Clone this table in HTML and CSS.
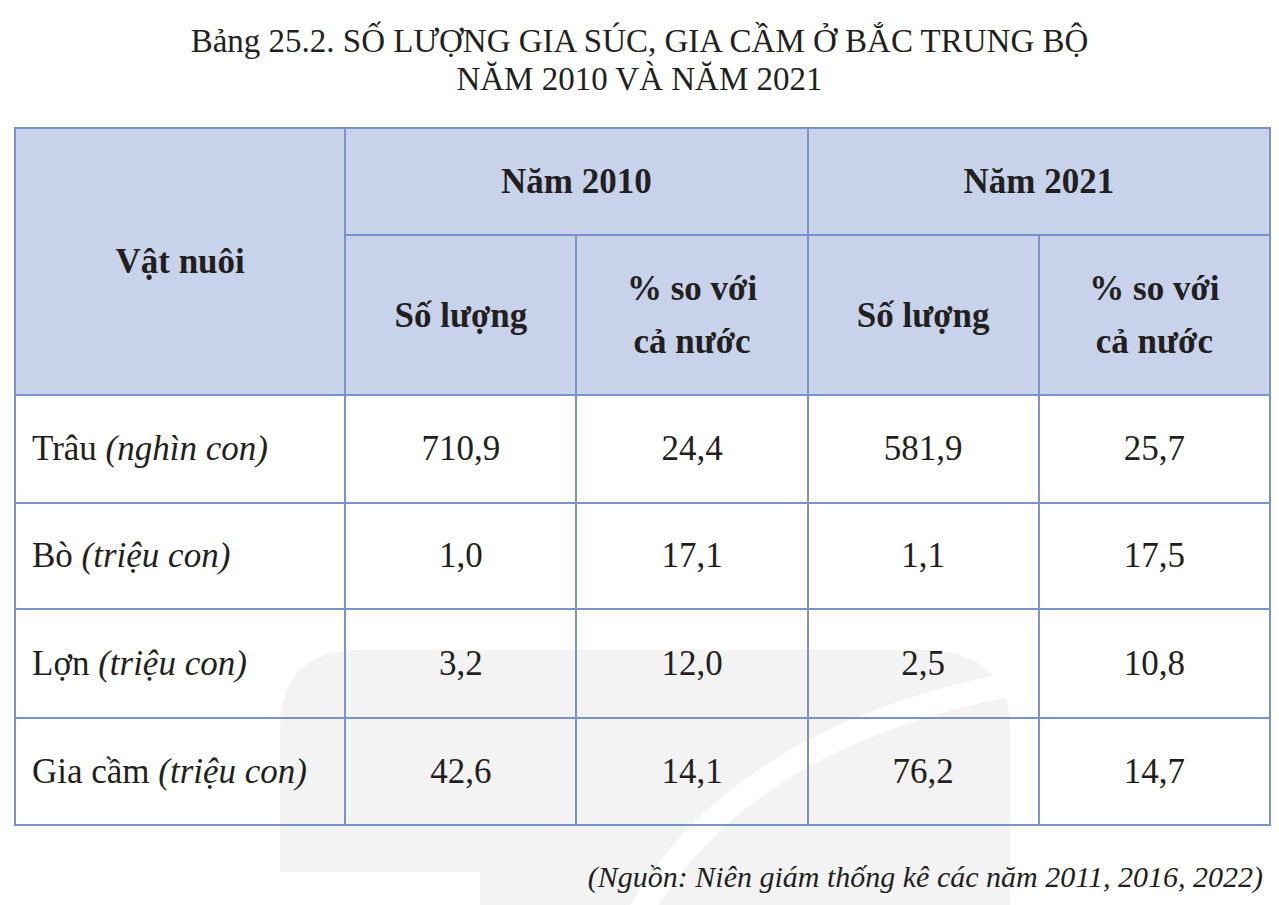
FILE: index.html
```html
<!DOCTYPE html>
<html lang="vi">
<head>
<meta charset="utf-8">
<title>Bảng 25.2</title>
<link rel="stylesheet" href="styles.css">
</head>
<body>
<div class="page">
  <svg class="watermark" width="740" height="255" viewBox="0 0 740 255" aria-hidden="true">
    <path d="M0 255 L0 80 Q0 0 80 0 L640 0 Q730 0 730 80 L730 255 Z" fill="#f3f3f3"/>
    <path d="M360 262 Q460 90 722 36" fill="none" stroke="#ffffff" stroke-width="24"/>
    <rect x="0" y="222" width="200" height="40" fill="#ffffff"/>
  </svg>
  <h1 class="title">Bảng 25.2. SỐ LƯỢNG GIA SÚC, GIA CẦM Ở BẮC TRUNG BỘ<br>NĂM 2010 VÀ NĂM 2021</h1>
  <table class="data">
    <colgroup>
      <col class="c-name"><col class="c-num"><col class="c-num"><col class="c-num"><col class="c-num">
    </colgroup>
    <thead>
      <tr class="h1">
        <th class="hd" rowspan="2">Vật nuôi</th>
        <th class="hd" colspan="2">Năm 2010</th>
        <th class="hd" colspan="2">Năm 2021</th>
      </tr>
      <tr class="h2">
        <th class="hd">Số lượng</th>
        <th class="hd">% so với<br>cả nước</th>
        <th class="hd">Số lượng</th>
        <th class="hd">% so với<br>cả nước</th>
      </tr>
    </thead>
    <tbody>
      <tr class="r1"><td class="cell name">Trâu <i class="unit">(nghìn con)</i></td><td class="cell">710,9</td><td class="cell">24,4</td><td class="cell">581,9</td><td class="cell">25,7</td></tr>
      <tr class="r2"><td class="cell name">Bò <i class="unit">(triệu con)</i></td><td class="cell">1,0</td><td class="cell">17,1</td><td class="cell">1,1</td><td class="cell">17,5</td></tr>
      <tr class="r3"><td class="cell name">Lợn <i class="unit">(triệu con)</i></td><td class="cell">3,2</td><td class="cell">12,0</td><td class="cell">2,5</td><td class="cell">10,8</td></tr>
      <tr class="r4"><td class="cell name">Gia cầm <i class="unit">(triệu con)</i></td><td class="cell">42,6</td><td class="cell">14,1</td><td class="cell">76,2</td><td class="cell">14,7</td></tr>
    </tbody>
  </table>
  <p class="source">(Nguồn: Niên giám thống kê các năm 2011, 2016, 2022)</p>
</div>
</body>
</html>
```

FILE: styles.css
```css
html, body {
  margin: 0;
  padding: 0;
  background: #ffffff;
}

.page {
  position: relative;
  width: 1279px;
  height: 905px;
  overflow: hidden;
  font-family: "Liberation Serif", "Times New Roman", Times, serif;
  color: #231f20;
}

.watermark {
  position: absolute;
  left: 280px;
  top: 650px;
  z-index: 0;
}

.title {
  position: relative;
  z-index: 1;
  margin: 0;
  padding-top: 22px;
  font-family: "Liberation Serif", "Times New Roman", Times, serif;
  font-weight: normal;
  font-size: 33px;
  line-height: 38px;
  text-align: center;
}

.data {
  position: relative;
  z-index: 1;
  margin: 29px 0 0 14px;
  width: 1257px;
  border-collapse: collapse;
  table-layout: fixed;
}

.c-name { width: 330px; }
.c-num { width: 231px; }

.data .hd,
.data .cell {
  border: 2px solid #7a93c8;
  text-align: center;
  vertical-align: middle;
  padding: 0;
  font-family: "Liberation Serif", "Times New Roman", Times, serif;
  color: #231f20;
}

.data .hd {
  background: #c8d3eb;
  font-weight: bold;
  font-size: 35px;
  line-height: 53px;
}

.data tr.h1 .hd { height: 105px; }
.data tr.h2 .hd { height: 158px; }

.data .cell {
  font-size: 35px;
  line-height: 40px;
  background: transparent;
}

.data tr.r1 .cell { height: 106px; }
.data tr.r2 .cell { height: 104px; }
.data tr.r3 .cell { height: 107px; }
.data tr.r4 .cell { height: 105px; }

.data .cell.name {
  text-align: left;
  padding-left: 16px;
}

.data .unit {
  font-style: italic;
}

.source {
  position: relative;
  z-index: 1;
  margin: 34px 16px 0 0;
  text-align: right;
  font-family: "Liberation Serif", "Times New Roman", Times, serif;
  font-size: 30px;
  font-style: italic;
  color: #231f20;
}
```
